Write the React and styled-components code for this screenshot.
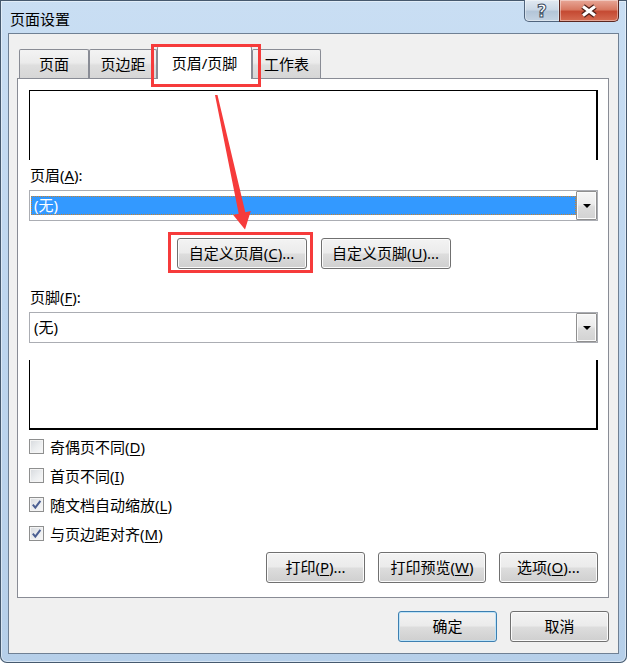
import React from "react";
import styled, { createGlobalStyle } from "styled-components";

const GlobalStyle = createGlobalStyle`
  html, body {
    margin: 0;
    padding: 0;
    background: #ffffff;
  }
  body {
    font-family: "Noto Sans", "Noto Sans CJK SC", sans-serif;
    font-size: 15px;
    color: #000;
  }
  * {
    box-sizing: border-box;
  }
  u {
    text-decoration-thickness: 1px;
    text-underline-offset: 2px;
  }
`;

// aero glass frame
const Window = styled.div`
  position: relative;
  width: 627px;
  height: 663px;
  padding: 0 8px 9px 8px;
  display: flex;
  flex-direction: column;
  border-radius: 0 0 7px 7px;
  background: linear-gradient(180deg, #c9def3 0%, #bed6ef 45%, #b6cfe9 100%);
  box-shadow: inset 0 0 0 1px #46596e, inset 0 0 0 2px rgba(255, 255, 255, 0.45);
`;

const TitleBar = styled.div`
  height: 33px;
  display: flex;
  justify-content: space-between;
  align-items: flex-start;
`;

const Title = styled.div`
  margin: 9px 0 0 2px;
  font-size: 15px;
  line-height: 20px;
  color: #000;
`;

const Controls = styled.div`
  display: flex;
`;

const CaptionButton = styled.div`
  width: ${(p) => p.$w}px;
  height: 22px;
  margin-left: ${(p) => (p.$close ? "-1px" : "0")};
  display: flex;
  align-items: center;
  justify-content: center;
  border: 1px solid ${(p) => (p.$close ? "#5a2620" : "#50647d")};
  border-top: none;
  border-radius: ${(p) => (p.$close ? "0 0 5px 0" : "0 0 0 5px")};
  background: ${(p) =>
    p.$close
      ? "linear-gradient(180deg, #e8a797 0%, #d87a63 45%, #c54a33 55%, #d56c52 100%)"
      : "linear-gradient(180deg, #e1e9f2 0%, #cbd8e6 45%, #b3c5d8 55%, #c4d3e3 100%)"};
  box-shadow: inset 0 0 0 1px rgba(255, 255, 255, 0.4);
`;

const HelpGlyph = styled.span`
  font-family: "DejaVu Sans", sans-serif;
  font-weight: bold;
  font-size: 17px;
  line-height: 20px;
  color: #fff;
  -webkit-text-stroke: 1px #3a4a5e;
`;

const Client = styled.div`
  flex: 1;
  display: flex;
  flex-direction: column;
  padding: 12px 9px 0 8px;
  background: #f0f0f0;
  border: 1px solid #6f8094;
`;

const TabRow = styled.div`
  height: 33px;
  margin-bottom: -1px;
  padding-left: 2px;
  display: flex;
  align-items: flex-end;
`;

const Tab = styled.div`
  position: relative;
  width: ${(p) => p.$w}px;
  height: ${(p) => (p.$active ? "33px" : "29px")};
  margin-bottom: ${(p) => (p.$active ? "0" : "1px")};
  z-index: ${(p) => (p.$active ? 2 : 0)};
  display: flex;
  align-items: center;
  justify-content: center;
  font-size: 15px;
  line-height: 20px;
  border: 1px solid #898c95;
  border-bottom: none;
  border-radius: 2px 2px 0 0;
  background: ${(p) =>
    p.$active
      ? "#ffffff"
      : "linear-gradient(180deg, #f3f3f3 0%, #ebebeb 45%, #dedede 55%, #d6d6d6 100%)"};
`;

const Panel = styled.div`
  position: relative;
  z-index: 1;
  height: 520px;
  display: flex;
  flex-direction: column;
  padding: 11px 10px 0 11px;
  background: #ffffff;
  border: 1px solid #898c95;
`;

const Preview = styled.div`
  height: 70px;
  flex-shrink: 0;
  border-left: 1px solid #000;
  border-right: 2px solid #000;
  border-top: ${(p) => (p.$edge === "top" ? "1px solid #000" : "none")};
  border-bottom: ${(p) => (p.$edge === "bottom" ? "2px solid #000" : "none")};
  margin-top: ${(p) => p.$mt || 0}px;
`;

const FieldLabel = styled.div`
  margin-top: ${(p) => p.$mt}px;
  padding-left: 1px;
  font-size: 15px;
  line-height: 20px;
`;

const ComboBox = styled.div`
  margin-top: 5px;
  height: 31px;
  display: flex;
  border: 1px solid #abadb3;
  background: #fff;
`;

const ComboValue = styled.div`
  flex: 1;
  padding: 5px 0 5px 1px;
`;

const ComboItem = styled.div`
  height: 19px;
  padding-left: 2px;
  font-size: 15px;
  line-height: 17px;
  color: ${(p) => (p.$selected ? "#fff" : "#000")};
  background: ${(p) => (p.$selected ? "#3399ff" : "transparent")};
  border: 1px dotted ${(p) => (p.$selected ? "#c9822f" : "transparent")};
`;

const DropButton = styled.div`
  width: 21px;
  display: flex;
  align-items: center;
  justify-content: center;
  border: 1px solid #8f8f8f;
  border-radius: 1px;
  background: linear-gradient(180deg, #f6f6f6 0%, #ececec 45%, #dcdcdc 55%, #d2d2d2 100%);
  box-shadow: inset 0 0 0 1px #fbfbfb;

  &::after {
    content: "";
    border-left: 4px solid transparent;
    border-right: 4px solid transparent;
    border-top: 4px solid #000;
  }
`;

const ButtonRow = styled.div`
  margin-top: ${(p) => p.$mt}px;
  display: flex;
  justify-content: ${(p) => p.$align || "flex-end"};
  gap: ${(p) => p.$gap}px;
`;

const Button = styled.div`
  width: ${(p) => p.$w}px;
  height: 31px;
  display: flex;
  align-items: center;
  justify-content: center;
  font-size: 15px;
  line-height: 20px;
  padding-bottom: 1px;
  border: 1px solid ${(p) => (p.$default ? "#3c7fb1" : "#707070")};
  border-radius: 3px;
  background: linear-gradient(180deg, #f3f3f3 0%, #ebebeb 48%, #dddddd 52%, #cfcfcf 100%);
  box-shadow: inset 0 0 0 1px ${(p) => (p.$default ? "#bfe3f7" : "#fbfbfb")};
`;

const CheckList = styled.div`
  margin-top: 2px;
  display: flex;
  flex-direction: column;
`;

const CheckRow = styled.div`
  height: 29px;
  display: flex;
  align-items: center;
  gap: 6px;
  font-size: 15px;
  line-height: 20px;
`;

const Box = styled.div`
  width: 15px;
  height: 15px;
  display: flex;
  align-items: center;
  justify-content: center;
  border: 1px solid #8e8f8f;
  background: linear-gradient(135deg, #d6d9dd 0%, #eceef0 55%, #f8f8f8 100%);
  box-shadow: inset 0 0 0 1px #f4f4f4;
`;

const Overlay = styled.svg`
  position: absolute;
  left: 0;
  top: 0;
  z-index: 10;
  pointer-events: none;
`;

const Check = ({ label, hot, checked }) => (
  <CheckRow>
    <Box>
      {checked && (
        <svg width="11" height="11" viewBox="0 0 11 11">
          <path d="M1.8 5.6 L4.3 8.6 L9.4 1.8" fill="none" stroke="#4b5f92" strokeWidth="2" />
        </svg>
      )}
    </Box>
    <span>
      {label}(<u>{hot}</u>)
    </span>
  </CheckRow>
);

const Combo = ({ value, selected }) => (
  <ComboBox>
    <ComboValue>
      <ComboItem $selected={selected}>{value}</ComboItem>
    </ComboValue>
    <DropButton />
  </ComboBox>
);

export default function App() {
  return (
    <>
      <GlobalStyle />
      <Window>
        <TitleBar>
          <Title>页面设置</Title>
          <Controls>
            <CaptionButton $w={36}>
              <HelpGlyph>?</HelpGlyph>
            </CaptionButton>
            <CaptionButton $w={60} $close>
              <svg width="22" height="14" viewBox="0 0 22 14">
                <path d="M5 2.5 L17 11.5 M17 2.5 L5 11.5" stroke="#4a1d16" strokeWidth="5.5" />
                <path d="M5 2.5 L17 11.5 M17 2.5 L5 11.5" stroke="#ffffff" strokeWidth="3.2" />
              </svg>
            </CaptionButton>
          </Controls>
        </TitleBar>

        <Client>
          <TabRow>
            <Tab $w={70}>页面</Tab>
            <Tab $w={68}>页边距</Tab>
            <Tab $w={95} $active>
              页眉/页脚
            </Tab>
            <Tab $w={69}>工作表</Tab>
          </TabRow>

          <Panel>
            <Preview $edge="top" />
            <FieldLabel $mt={5}>
              页眉(<u>A</u>):
            </FieldLabel>
            <Combo value="(无)" selected />
            <ButtonRow $mt={17} $gap={14} $align="center">
              <Button $w={130}>
                自定义页眉(<u>C</u>)...
              </Button>
              <Button $w={130}>
                自定义页脚(<u>U</u>)...
              </Button>
            </ButtonRow>
            <FieldLabel $mt={18}>
              页脚(<u>F</u>):
            </FieldLabel>
            <Combo value="(无)" />
            <Preview $edge="bottom" $mt={17} />
            <CheckList>
              <Check label="奇偶页不同" hot="D" />
              <Check label="首页不同" hot="I" />
              <Check label="随文档自动缩放" hot="L" checked />
              <Check label="与页边距对齐" hot="M" checked />
            </CheckList>
            <ButtonRow $mt={4} $gap={13}>
              <Button $w={99}>
                打印(<u>P</u>)...
              </Button>
              <Button $w={108}>
                打印预览(<u>W</u>)
              </Button>
              <Button $w={99}>
                选项(<u>O</u>)...
              </Button>
            </ButtonRow>
          </Panel>

          <ButtonRow $mt={13} $gap={13}>
            <Button $w={99} $default>
              确定
            </Button>
            <Button $w={99}>取消</Button>
          </ButtonRow>
        </Client>

        <Overlay width="627" height="663" viewBox="0 0 627 663">
          <rect x="152.5" y="45.5" width="107" height="40" fill="none" stroke="#f63b3b" strokeWidth="3" />
          <rect x="169.5" y="233.5" width="142" height="38" fill="none" stroke="#f63b3b" strokeWidth="3" />
          <polygon
            points="215,95 217.5,95 245.3,212.2 250.8,211.1 245,229.5 233.2,214.9 238.7,213.7"
            fill="#f63b3b"
          />
        </Overlay>
      </Window>
    </>
  );
}
